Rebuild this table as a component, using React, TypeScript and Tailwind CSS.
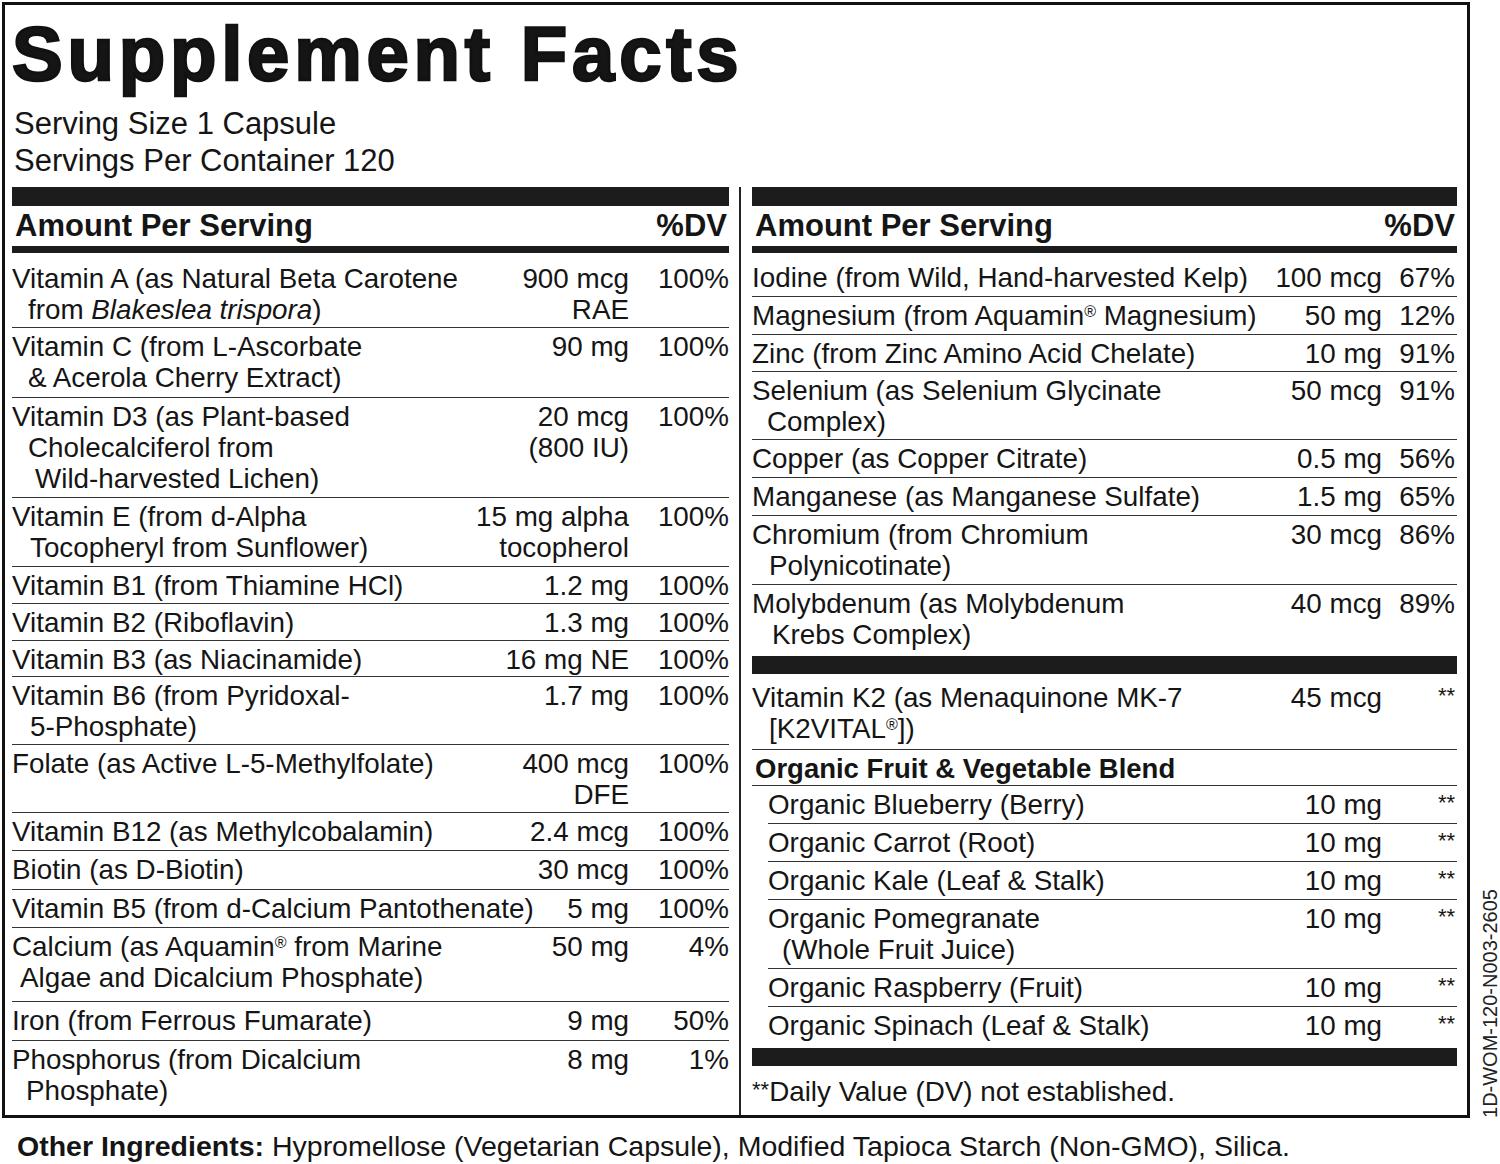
import type { ReactNode } from "react";

type Line = [string, ReactNode];

interface FactRow {
  lines: Line[];
  amount: string[];
  dv: ReactNode;
  h?: string;
}

const Reg = () => <sup className="text-[16px]">®</sup>;
const Stars = () => <span className="text-[22px] leading-none align-[4px]">**</span>;

const leftRows: FactRow[] = [
  {
    lines: [
      ["", "Vitamin A (as Natural Beta Carotene"],
      ["pl-[16px]", <>from <i>Blakeslea trispora</i>)</>],
    ],
    amount: ["900 mcg", "RAE"],
    dv: "100%",
    h: "h-[68px]",
  },
  {
    lines: [
      ["", "Vitamin C (from L-Ascorbate"],
      ["pl-[16px]", "& Acerola Cherry Extract)"],
    ],
    amount: ["90 mg"],
    dv: "100%",
    h: "h-[70px]",
  },
  {
    lines: [
      ["", "Vitamin D3 (as Plant-based"],
      ["pl-[16px]", "Cholecalciferol from"],
      ["pl-[23px]", "Wild-harvested Lichen)"],
    ],
    amount: ["20 mcg", "(800 IU)"],
    dv: "100%",
    h: "h-[100px]",
  },
  {
    lines: [
      ["", "Vitamin E (from d-Alpha"],
      ["pl-[18px]", "Tocopheryl from Sunflower)"],
    ],
    amount: ["15 mg alpha", "tocopherol"],
    dv: "100%",
    h: "h-[69px]",
  },
  { lines: [["", "Vitamin B1 (from Thiamine HCl)"]], amount: ["1.2 mg"], dv: "100%", h: "h-[37px]" },
  { lines: [["", "Vitamin B2 (Riboflavin)"]], amount: ["1.3 mg"], dv: "100%", h: "h-[37px]" },
  { lines: [["", "Vitamin B3 (as Niacinamide)"]], amount: ["16 mg NE"], dv: "100%", h: "h-[36px]" },
  {
    lines: [
      ["", "Vitamin B6 (from Pyridoxal-"],
      ["pl-[18px]", "5-Phosphate)"],
    ],
    amount: ["1.7 mg"],
    dv: "100%",
    h: "h-[68px]",
  },
  {
    lines: [["", "Folate (as Active L-5-Methylfolate)"]],
    amount: ["400 mcg", "DFE"],
    dv: "100%",
    h: "h-[68px]",
  },
  { lines: [["", "Vitamin B12 (as Methylcobalamin)"]], amount: ["2.4 mcg"], dv: "100%", h: "h-[38px]" },
  { lines: [["", "Biotin (as D-Biotin)"]], amount: ["30 mcg"], dv: "100%", h: "h-[39px]" },
  { lines: [["", "Vitamin B5 (from d-Calcium Pantothenate)"]], amount: ["5 mg"], dv: "100%", h: "h-[38px]" },
  {
    lines: [
      ["", <>Calcium (as Aquamin<Reg /> from Marine</>],
      ["pl-[8px]", "Algae and Dicalcium Phosphate)"],
    ],
    amount: ["50 mg"],
    dv: "4%",
    h: "h-[74px]",
  },
  { lines: [["", "Iron (from Ferrous Fumarate)"]], amount: ["9 mg"], dv: "50%", h: "h-[39px]" },
  {
    lines: [
      ["", "Phosphorus (from Dicalcium"],
      ["pl-[14px]", "Phosphate)"],
    ],
    amount: ["8 mg"],
    dv: "1%",
  },
];

const mineralRows: FactRow[] = [
  { lines: [["", "Iodine (from Wild, Hand-harvested Kelp)"]], amount: ["100 mcg"], dv: "67%" },
  { lines: [["", <>Magnesium (from Aquamin<Reg /> Magnesium)</>]], amount: ["50 mg"], dv: "12%" },
  { lines: [["", "Zinc (from Zinc Amino Acid Chelate)"]], amount: ["10 mg"], dv: "91%", h: "h-[37px]" },
  {
    lines: [
      ["", "Selenium (as Selenium Glycinate"],
      ["pl-[15px]", "Complex)"],
    ],
    amount: ["50 mcg"],
    dv: "91%",
    h: "h-[68px]",
  },
  { lines: [["", "Copper (as Copper Citrate)"]], amount: ["0.5 mg"], dv: "56%" },
  { lines: [["", "Manganese (as Manganese Sulfate)"]], amount: ["1.5 mg"], dv: "65%" },
  {
    lines: [
      ["", "Chromium (from Chromium"],
      ["pl-[17px]", "Polynicotinate)"],
    ],
    amount: ["30 mcg"],
    dv: "86%",
  },
  {
    lines: [
      ["", "Molybdenum (as Molybdenum"],
      ["pl-[20px]", "Krebs Complex)"],
    ],
    amount: ["40 mcg"],
    dv: "89%",
  },
];

const blendRows: FactRow[] = [
  { lines: [["", "Organic Blueberry (Berry)"]], amount: ["10 mg"], dv: <Stars /> },
  { lines: [["", "Organic Carrot (Root)"]], amount: ["10 mg"], dv: <Stars /> },
  { lines: [["", "Organic Kale (Leaf & Stalk)"]], amount: ["10 mg"], dv: <Stars /> },
  {
    lines: [
      ["", "Organic Pomegranate"],
      ["pl-[14px]", "(Whole Fruit Juice)"],
    ],
    amount: ["10 mg"],
    dv: <Stars />,
  },
  { lines: [["", "Organic Raspberry (Fruit)"]], amount: ["10 mg"], dv: <Stars /> },
  { lines: [["", "Organic Spinach (Leaf & Stalk)"]], amount: ["10 mg"], dv: <Stars /> },
];

function Row({ row, dvClass, last }: { row: FactRow; dvClass: string; last?: boolean }) {
  return (
    <div
      className={`flex pt-[3px] pb-[3px] leading-[31px] ${row.h ?? ""} ${last ? "" : "border-b border-[#333]"}`}
    >
      <div className="flex-1 whitespace-nowrap">
        {row.lines.map(([cls, text], i) => (
          <div key={i} className={cls}>
            {text}
          </div>
        ))}
      </div>
      <div className="text-right whitespace-nowrap">
        {row.amount.map((a, i) => (
          <div key={i}>{a}</div>
        ))}
      </div>
      <div className={`${dvClass} text-right whitespace-nowrap`}>{row.dv}</div>
    </div>
  );
}

function ColumnHead() {
  return (
    <>
      <div className="h-[19px] bg-[#1c1c1c]" />
      <div className="h-[40px] flex items-center justify-between pl-[3px] pr-[2px] text-[31px] font-bold">
        <span>Amount Per Serving</span>
        <span>%DV</span>
      </div>
      <div className="h-[7px] bg-[#1c1c1c]" />
    </>
  );
}

export default function App() {
  return (
    <div className="w-[1500px] h-[1164px] bg-white pt-[2px] pl-[2px] font-['Liberation_Sans',Arial,sans-serif] text-[#151515] overflow-hidden">
      <div className="flex">
        <div className="w-[1468px] h-[1116px] border-[3px] border-[#111] pl-[7px] pt-[12px] flex flex-col">
          <h1 className="text-[76px] leading-[74px] font-bold tracking-[4.8px] [-webkit-text-stroke:2.5px_#111]">
            Supplement Facts
          </h1>
          <div className="mt-[13.5px] pl-[2px] text-[31px] leading-[37px]">
            <div>Serving Size 1 Capsule</div>
            <div>Servings Per Container 120</div>
          </div>

          <div className="mt-[8.5px] flex flex-1 text-[27.8px]">
            {/* vitamins */}
            <div className="w-[717px]">
              <ColumnHead />
              <div className="mt-[7px]">
                {leftRows.map((r, i) => (
                  <Row key={i} row={r} dvClass="w-[100px]" last={i === leftRows.length - 1} />
                ))}
              </div>
            </div>

            {/* minerals + blend */}
            <div className="ml-[10px] border-l-2 border-[#222] pl-[11px] w-[718px]">
              <ColumnHead />
              <div className="mt-[6px]">
                {mineralRows.map((r, i) => (
                  <Row key={i} row={r} dvClass="w-[75px] pr-[2px]" last={i === mineralRows.length - 1} />
                ))}
              </div>
              <div className="mt-[3px] h-[18px] bg-[#1c1c1c]" />
              <div className="flex pt-[8px] pb-[5px] leading-[31px] border-b border-[#333]">
                <div className="flex-1 whitespace-nowrap">
                  <div>Vitamin K2 (as Menaquinone MK-7</div>
                  <div className="pl-[17px]">
                    [K2VITAL<Reg />])
                  </div>
                </div>
                <div className="text-right">45 mcg</div>
                <div className="w-[75px] pr-[2px] text-right">
                  <Stars />
                </div>
              </div>
              <div className="pt-[3px] pb-[1px] leading-[31px] border-b border-[#333] pl-[3px] text-[27.5px] font-bold">
                Organic Fruit &amp; Vegetable Blend
              </div>
              <div className="ml-[16px]">
                {blendRows.map((r, i) => (
                  <Row key={i} row={r} dvClass="w-[75px] pr-[2px]" last={i === blendRows.length - 1} />
                ))}
              </div>
              <div className="mt-[4px] h-[18px] bg-[#1c1c1c]" />
              <div className="pt-[10px] leading-[31px]">
                <span className="text-[22px] leading-none align-[4px]">**</span>Daily Value (DV) not established.
              </div>
            </div>
          </div>
        </div>

        <div className="self-end ml-[10px] text-[20px] leading-[20px] text-[#222] whitespace-nowrap [writing-mode:vertical-rl] rotate-180">
          1D-WOM-120-N003-2605
        </div>
      </div>

      <p className="mt-[12px] pl-[15px] text-[28.5px] leading-[32px]">
        <span className="font-bold">Other Ingredients:</span> Hypromellose (Vegetarian Capsule), Modified Tapioca Starch
        (Non-GMO), Silica.
      </p>
    </div>
  );
}
